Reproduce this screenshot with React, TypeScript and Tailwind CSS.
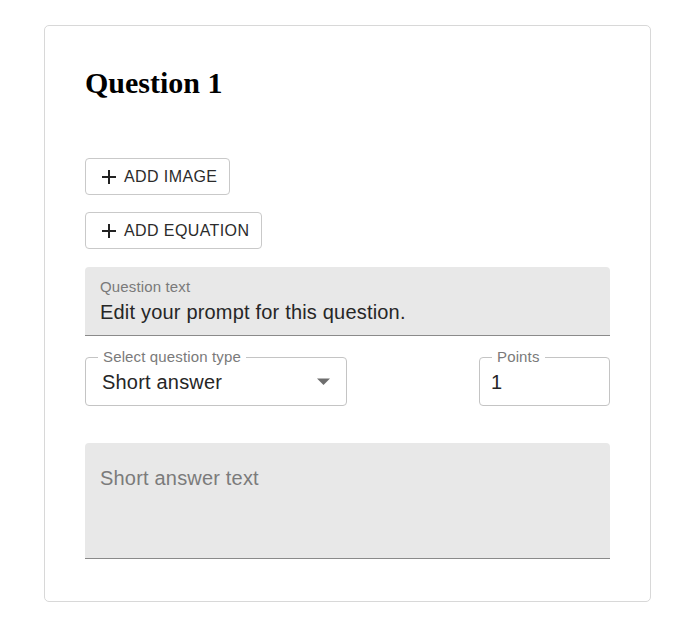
import React from "react";

function Plus() {
  return (
    <svg width="14" height="14" viewBox="0 0 14 14" className="shrink-0">
      <path d="M7 0v14M0 7h14" stroke="#222222" strokeWidth="2" fill="none" />
    </svg>
  );
}

function OutlineButton({ label }: { label: string }) {
  return (
    <button
      type="button"
      className="flex h-[37px] items-center gap-[8px] self-start rounded-[4px] border border-[#c9c9c9] bg-white pl-[16px] pr-[12px] text-[16px] uppercase tracking-[0.4px] text-[#2b2b2b]"
    >
      <Plus />
      <span className="leading-[20px]">{label}</span>
    </button>
  );
}

export default function App() {
  return (
    <div className="min-h-[629px] bg-white pt-[25px] font-['Liberation_Sans',Arial,sans-serif]">
      <div className="mx-auto flex w-[607px] flex-col rounded-[5px] border border-[#d8d8d8] bg-white px-[40px] pb-[42px] pt-[40px]">
        <h2 className="font-['Liberation_Serif','Times_New_Roman',serif] text-[30px] font-bold leading-[34px] text-black">
          Question 1
        </h2>

        <div className="mt-[58px] flex flex-col gap-[17px]">
          <OutlineButton label="Add image" />
          <OutlineButton label="Add equation" />
        </div>

        <div className="mt-[18px] flex h-[69px] flex-col rounded-t-[4px] border-b border-[#8a8a8a] bg-[#e8e8e8] pl-[15px] pt-[12px]">
          <span className="text-[15px] leading-[15px] tracking-[0.14px] text-[#7a7a7a]">Question text</span>
          <span className="mt-[6px] text-[20px] leading-[24px] tracking-[0.19px] text-[#262626]">
            Edit your prompt for this question.
          </span>
        </div>

        <div className="mt-[21px] flex items-start justify-between">
          <div className="relative flex h-[49px] w-[262px] items-center rounded-[4px] border border-[#c4c4c4] pl-[16px] pr-[16px]">
            <span className="absolute left-[12px] top-[-9px] bg-white px-[5px] text-[15px] leading-[15px] tracking-[0.14px] text-[#7a7a7a]">
              Select question type
            </span>
            <span className="flex-1 text-[20px] leading-[24px] tracking-[0.19px] text-[#262626]">Short answer</span>
            <svg width="13" height="7" viewBox="0 0 13 7" className="shrink-0">
              <path d="M0 0.5h13L6.5 7z" fill="#6e6e6e" />
            </svg>
          </div>

          <div className="relative flex h-[49px] w-[131px] items-center rounded-[4px] border border-[#c4c4c4] pl-[11px]">
            <span className="absolute left-[12px] top-[-9px] bg-white px-[5px] text-[15px] leading-[15px] tracking-[0.14px] text-[#7a7a7a]">
              Points
            </span>
            <span className="text-[20px] leading-[24px] tracking-[0.19px] text-[#262626]">1</span>
          </div>
        </div>

        <div className="mt-[37px] h-[116px] rounded-t-[4px] border-b border-[#8a8a8a] bg-[#e8e8e8] pl-[15px] pt-[23px]">
          <span className="text-[20px] leading-[24px] tracking-[0.19px] text-[#7b7b7b]">Short answer text</span>
        </div>
      </div>
    </div>
  );
}
